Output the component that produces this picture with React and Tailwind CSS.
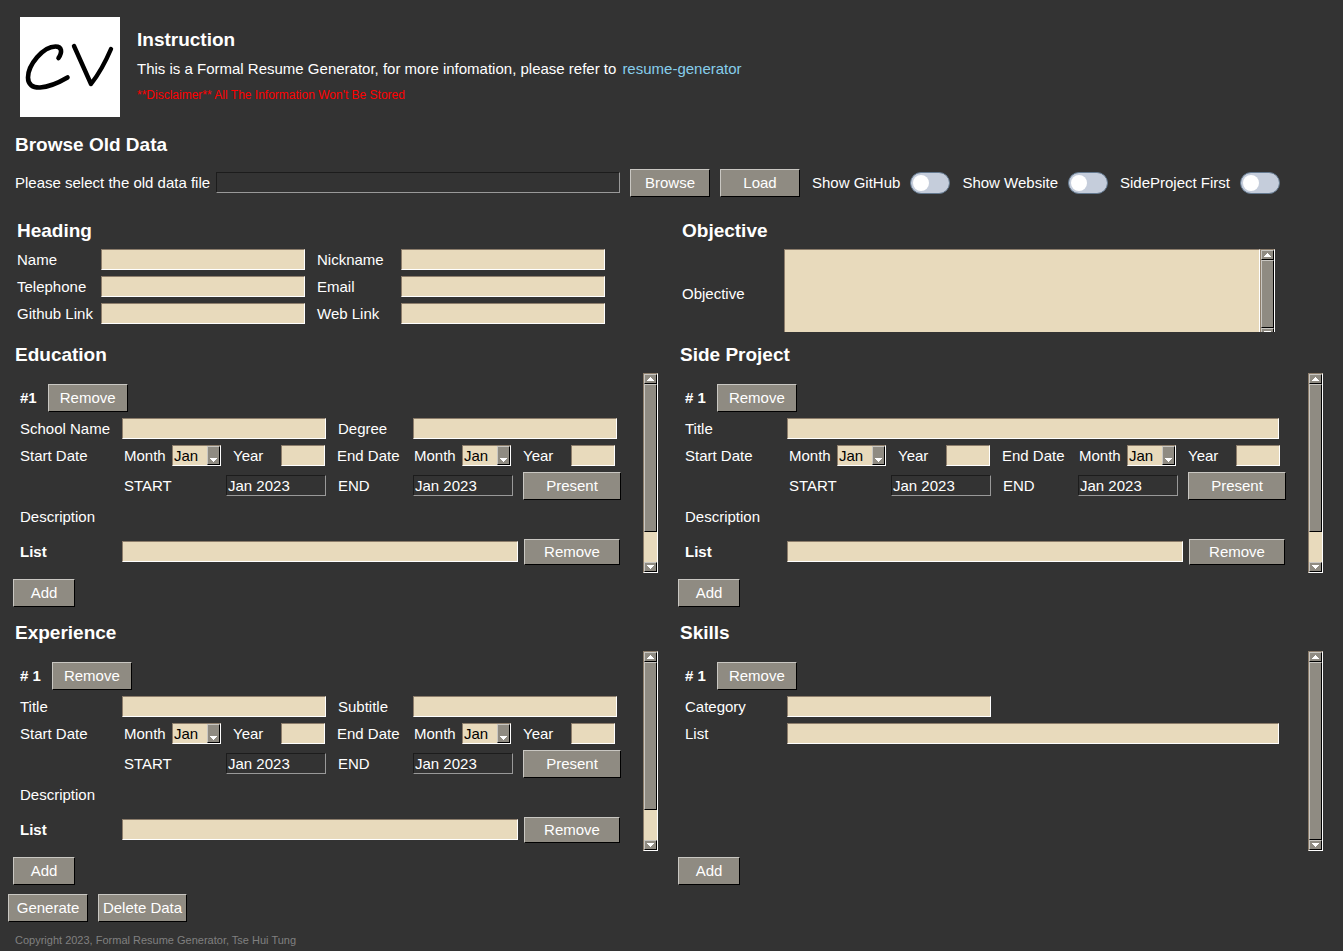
import { useId, useState } from 'react';

const RAISED = 'border border-t-[#c9c7c2] border-l-[#c9c7c2] border-b-black border-r-black bg-[#8f8b82]';
const SUNKEN = 'border border-t-[#8c7d6b] border-l-[#8c7d6b] border-b-white border-r-white bg-[#e8dabc] text-black';
const FLAT = 'mb-px h-[21px] border border-t-[#1c1c1c] border-l-[#1c1c1c] border-b-[#999] border-r-[#999] bg-[#333] px-px outline-none';

const MONTHS = ['Jan', 'Feb', 'Mar', 'Apr', 'May', 'Jun', 'Jul', 'Aug', 'Sep', 'Oct', 'Nov', 'Dec'];

function Button({ className = 'w-20 h-7', ...props }) {
  return <button type="button" className={`${RAISED} shrink-0 text-center whitespace-nowrap ${className}`} {...props} />;
}

function Title({ children, className = '' }) {
  return <h2 className={`pt-px text-[19px] leading-6 font-bold ${className}`}>{children}</h2>;
}

function Field({ label, labelClass = '', inputClass = 'w-[204px]', bold }) {
  const id = useId();
  return (
    <>
      <label htmlFor={id} className={`shrink-0 ${labelClass} ${bold ? 'font-bold' : ''}`}>
        {label}
      </label>
      <input id={id} type="text" className={`${SUNKEN} mb-px h-[21px] shrink-0 px-0.5 outline-none ${inputClass}`} />
    </>
  );
}

function Arrow({ down }) {
  return (
    <svg viewBox="0 0 7 4" className="h-1 w-[7px]" shapeRendering="crispEdges" fill="#fff">
      {down ? <path d="M0 0h7v1h-1v1h-1v1h-1v1h-1v-1h-1v-1h-1v-1h-1z" /> : <path d="M3 0h1v1h1v1h1v1h1v1h-7v-1h1v-1h1v-1h1z" />}
    </svg>
  );
}

function ScrollBar({ full, className = '' }) {
  return (
    <div className={`flex w-[15px] shrink-0 flex-col border border-t-[#8c7d6b] border-l-[#8c7d6b] border-b-white border-r-white bg-[#e8dabc] ${className}`}>
      <button type="button" aria-label="Scroll up" className={`${RAISED} flex h-[10px] shrink-0 items-center justify-center`}>
        <Arrow />
      </button>
      <div className={`${RAISED} ${full ? 'flex-1' : 'h-[148px]'}`} />
      <button type="button" aria-label="Scroll down" className={`${RAISED} mt-auto flex h-[10px] shrink-0 items-center justify-center`}>
        <Arrow down />
      </button>
    </div>
  );
}

function MonthSelect({ value, onChange }) {
  const id = useId();
  return (
    <>
      <label htmlFor={id} className="w-12 shrink-0">Month</label>
      <div className="relative mb-px w-[49px] shrink-0">
        <select
          id={id}
          value={value}
          onChange={(e) => onChange(e.target.value)}
          className={`${SUNKEN} block h-[21px] w-full appearance-none rounded-none pl-px leading-[19px] outline-none`}
        >
          {MONTHS.map((m) => (
            <option key={m}>{m}</option>
          ))}
        </select>
        <span className={`${RAISED} pointer-events-none absolute top-px right-px flex h-[19px] w-[13px] items-end justify-center pb-0.5`}>
          <Arrow down />
        </span>
      </div>
    </>
  );
}

function DateGroup({ value, onChange }) {
  return (
    <>
      <MonthSelect value={value} onChange={onChange} />
      <Field label="Year" labelClass="ml-3 w-12" inputClass="w-11" />
    </>
  );
}

function DateRows() {
  const [start, setStart] = useState('Jan');
  const [end, setEnd] = useState('Jan');
  const startId = useId();
  const endId = useId();
  return (
    <>
      <div className="mt-[5px] flex items-center">
        <span className="w-[104px] shrink-0">Start Date</span>
        <DateGroup value={start} onChange={setStart} />
        <span className="ml-3 w-[77px] shrink-0">End Date</span>
        <DateGroup value={end} onChange={setEnd} />
      </div>
      <div className="mt-[5px] flex items-center">
        <label htmlFor={startId} className="ml-[104px] w-[102px] shrink-0">START</label>
        <input id={startId} readOnly value={`${start} 2023`} className={`${FLAT} w-[100px] shrink-0`} />
        <label htmlFor={endId} className="ml-3 w-[75px] shrink-0">END</label>
        <input id={endId} readOnly value={`${end} 2023`} className={`${FLAT} w-[100px] shrink-0`} />
        <Button className="ml-2.5 h-7 w-[98px]">Present</Button>
      </div>
      <p className="mt-2">Description</p>
      <div className="mt-[13px] flex items-center">
        <Field bold label="List" labelClass="w-[102px]" inputClass="w-[396px]" />
        <Button className="ml-1.5 h-[26px] w-24">Remove</Button>
      </div>
    </>
  );
}

function Section({ title, index = '# 1', full, children }) {
  return (
    <section>
      <Title className="ml-[7px]">{title}</Title>
      <div className="mt-1.5 mr-[15px] flex h-[200px]">
        <div className="min-w-0 flex-1 overflow-hidden pt-[11px] pl-3">
          <div className="mb-1.5 flex items-center gap-[11px]">
            <span className="font-bold">{index}</span>
            <Button>Remove</Button>
          </div>
          {children}
        </div>
        <ScrollBar full={full} />
      </div>
      <Button className="mt-1.5 ml-[5px] h-7 w-[62px]">Add</Button>
    </section>
  );
}

function PairRow({ first, second }) {
  return (
    <div className="flex items-center">
      <Field label={first} labelClass="w-[102px]" />
      {second && <Field label={second} labelClass="ml-3 w-[75px]" />}
    </div>
  );
}

function WideRow({ label }) {
  return (
    <div className="flex items-center">
      <Field label={label} labelClass="w-[102px]" inputClass="w-[492px]" />
    </div>
  );
}

function Toggle({ label }) {
  return (
    <label className="flex shrink-0 items-center gap-2.5">
      {label}
      <span className="relative flex h-[22px] w-10">
        <input
          type="checkbox"
          className="peer h-full w-full appearance-none rounded-full border border-[#64798f] bg-[#c5cddb] checked:bg-sky-400"
        />
        <span className="pointer-events-none absolute top-[3px] left-[3px] size-4 rounded-full bg-white peer-checked:left-[21px]" />
      </span>
    </label>
  );
}

function Logo() {
  return (
    <svg viewBox="0 0 100 100" className="size-[100px] bg-white" fill="none" stroke="#000" strokeLinecap="round" strokeLinejoin="round">
      <path strokeWidth="4.6" d="M38.5 41C42.5 35 42 29.5 35.500 29.500C23 29.500 8 48 8 60.500C8 75 27 72.500 47.500 60.500" />
      <path strokeWidth="4.4" d="M54 29L71 67Q82 53 91 32" />
    </svg>
  );
}

export default function App() {
  const fileId = useId();
  const objectiveId = useId();

  return (
    <main className="min-h-screen bg-[#333] pt-[17px] pr-[5px] pl-2 font-['Liberation_Sans',Arial,sans-serif] text-[15px] leading-[18px] text-white">
      <header className="ml-3 flex gap-[17px]">
        <Logo />
        <div className="pt-2.5">
          <Title>Instruction</Title>
          <p className="mt-2 flex gap-1.5">
            <span>This is a Formal Resume Generator, for more infomation, please refer to</span>
            <a href="#resume-generator" className="text-[#87ceeb]">resume-generator</a>
          </p>
          <p className="mt-[9px] text-xs text-[#f00]">**Disclaimer** All The Information Won't Be Stored</p>
        </div>
      </header>

      <section className="ml-[7px]">
        <Title className="mt-[15px]">Browse Old Data</Title>
        <div className="mt-3 flex items-center">
          <label htmlFor={fileId} className="w-[201px] shrink-0">Please select the old data file</label>
          <input id={fileId} readOnly className={`${FLAT} w-[404px]`} />
          <Button className="ml-2.5 h-7 w-20">Browse</Button>
          <Button className="ml-2.5 h-7 w-20">Load</Button>
          <div className="ml-3 flex gap-3">
            <Toggle label="Show GitHub" />
            <Toggle label="Show Website" />
            <Toggle label="SideProject First" />
          </div>
        </div>
      </section>

      <div className="mt-[21px] grid grid-cols-2">
        <section className="ml-[9px]">
          <Title>Heading</Title>
          <div className="mt-1.5 grid w-fit grid-cols-[84px_204px_96px_204px] items-center gap-y-[5px]">
            <Field label="Name" />
            <Field label="Nickname" labelClass="pl-3" />
            <Field label="Telephone" />
            <Field label="Email" labelClass="pl-3" />
            <Field label="Github Link" />
            <Field label="Web Link" labelClass="pl-3" />
          </div>
        </section>
        <section className="ml-[9px]">
          <Title>Objective</Title>
          <div className="mt-1.5 flex h-[83px] overflow-hidden">
            <label htmlFor={objectiveId} className="w-[102px] pt-9">Objective</label>
            <textarea id={objectiveId} className={`${SUNKEN} h-[87px] w-[476px] resize-none px-0.5 outline-none`} />
            <ScrollBar full className="h-[90px]" />
          </div>
        </section>
      </div>

      <div className="mt-2.5 grid grid-cols-2 gap-y-[13px]">
        <Section title="Education" index="#1">
          <PairRow first="School Name" second="Degree" />
          <DateRows />
        </Section>
        <Section title="Side Project">
          <WideRow label="Title" />
          <DateRows />
        </Section>
        <Section title="Experience">
          <PairRow first="Title" second="Subtitle" />
          <DateRows />
        </Section>
        <Section title="Skills" full>
          <PairRow first="Category" />
          <div className="mt-[5px]">
            <WideRow label="List" />
          </div>
        </Section>
      </div>

      <div className="mt-[9px] flex gap-2.5">
        <Button>Generate</Button>
        <Button className="h-7 w-[89px]">Delete Data</Button>
      </div>
      <footer className="mt-2.5 ml-[7px] text-[11px] leading-4 text-[#808080]">Copyright 2023, Formal Resume Generator, Tse Hui Tung</footer>
    </main>
  );
}
